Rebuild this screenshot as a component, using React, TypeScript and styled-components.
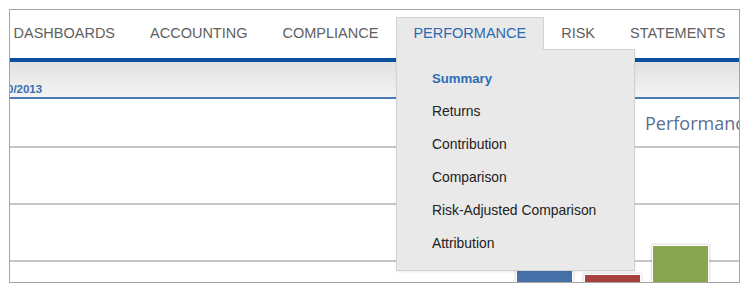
import React from 'react';
import styled, { createGlobalStyle } from 'styled-components';

const GlobalStyle = createGlobalStyle`
  html, body {
    margin: 0;
    padding: 0;
    background: #ffffff;
  }
  body {
    font-family: "Liberation Sans", Arial, sans-serif;
  }
`;

const Frame = styled.div`
  position: relative;
  display: flex;
  flex-direction: column;
  box-sizing: border-box;
  margin: 9px 0 0 9px;
  width: 731px;
  height: 274px;
  border: 1px solid #a4a4a4;
  overflow: hidden;
  background: #ffffff;
`;

const Nav = styled.div`
  display: flex;
  flex: none;
  box-sizing: border-box;
  height: 48px;
  padding-top: 7px;
  margin-left: -14px;
`;

const NavItem = styled.div<{ $active?: boolean }>`
  position: relative;
  box-sizing: border-box;
  height: 32px;
  padding: 0 16.5px;
  border: 1px solid ${p => (p.$active ? '#d2d2d2' : 'transparent')};
  border-bottom: none;
  background: ${p => (p.$active ? '#e9e9e9' : 'transparent')};
  color: ${p => (p.$active ? '#2c69b0' : '#606060')};
  font-size: 14.5px;
  line-height: 31px;
  white-space: nowrap;

  ${p =>
    p.$active &&
    `
    &::after {
      content: '';
      position: absolute;
      left: 0;
      right: 0;
      bottom: -1px;
      height: 1px;
      background: #e9e9e9;
      z-index: 11;
    }
  `}
`;

const Dropdown = styled.div`
  position: absolute;
  top: 100%;
  left: -1px;
  z-index: 10;
  box-sizing: border-box;
  width: 239px;
  padding: 12px 0 10px 35px;
  background: #e9e9e9;
  border: 1px solid #d2d2d2;
  box-shadow: 0 1px 2px rgba(0, 0, 0, 0.08);
`;

const MenuItem = styled.div<{ $current?: boolean }>`
  height: 33px;
  line-height: 33px;
  font-size: ${p => (p.$current ? '13.2px' : '13.9px')};
  font-weight: ${p => (p.$current ? 700 : 400)};
  color: ${p => (p.$current ? '#2f6db3' : '#222222')};
  white-space: nowrap;
`;

const BlueBar = styled.div`
  flex: none;
  height: 4px;
  background: #0b4f9d;
`;

const DateBand = styled.div`
  flex: none;
  box-sizing: border-box;
  height: 37px;
  padding-top: 20px;
  background: linear-gradient(#e1e1e1, #f4f4f4);
  border-bottom: 2px solid #4c7bb8;
  overflow: hidden;
`;

const DateText = styled.span`
  display: block;
  margin-left: -19px;
  font-size: 11.5px;
  font-weight: 700;
  line-height: 14px;
  color: #3b6db1;
  white-space: nowrap;
`;

const Rows = styled.div`
  position: relative;
  display: flex;
  flex-direction: column;
  flex: 1;
`;

const Row = styled.div<{ $height?: number }>`
  flex: ${p => (p.$height ? 'none' : 1)};
  height: ${p => (p.$height ? `${p.$height}px` : 'auto')};
  border-bottom: ${p => (p.$height ? '2px solid #c6c6c6' : 'none')};
`;

const ChartTitle = styled.div`
  position: absolute;
  top: 15px;
  left: 635px;
  font-family: "Open Sans", "Liberation Sans", sans-serif;
  font-size: 18px;
  line-height: 18px;
  color: #5a7090;
  white-space: nowrap;
`;

const BarGroup = styled.div`
  position: absolute;
  left: 507px;
  bottom: -12px;
  display: flex;
  align-items: flex-end;
  gap: 13px;
`;

const Bar = styled.div<{ $color: string }>`
  width: 55px;
  background: ${p => p.$color};
  box-shadow: 0 0 0 1px #ffffff, 0 0 2px 2px rgba(0, 0, 0, 0.12);
`;

const navItems = ['DASHBOARDS', 'ACCOUNTING', 'COMPLIANCE', 'PERFORMANCE', 'RISK', 'STATEMENTS'];
const menuItems = ['Summary', 'Returns', 'Contribution', 'Comparison', 'Risk-Adjusted Comparison', 'Attribution'];

const bars = [
  { color: '#4570a8', top: 250 },
  { color: '#a6433f', top: 274 },
  { color: '#8aa54f', top: 245 },
];

// bottom of the visible frame content, in page pixels
const chartBase = 281;

export default function App() {
  return (
    <>
      <GlobalStyle />
      <Frame>
        <Nav>
          {navItems.map(item => (
            <NavItem key={item} $active={item === 'PERFORMANCE'}>
              {item}
              {item === 'PERFORMANCE' && (
                <Dropdown>
                  {menuItems.map(m => (
                    <MenuItem key={m} $current={m === 'Summary'}>
                      {m}
                    </MenuItem>
                  ))}
                </Dropdown>
              )}
            </NavItem>
          ))}
        </Nav>
        <BlueBar />
        <DateBand>
          <DateText>9/30/2013</DateText>
        </DateBand>
        <Rows>
          <Row $height={47} />
          <Row $height={55} />
          <Row $height={55} />
          <Row />
          <ChartTitle>Performance Summary</ChartTitle>
          <BarGroup>
            {bars.map(b => (
              <Bar key={b.color} $color={b.color} style={{ height: chartBase - b.top + 12 }} />
            ))}
          </BarGroup>
        </Rows>
      </Frame>
    </>
  );
}
